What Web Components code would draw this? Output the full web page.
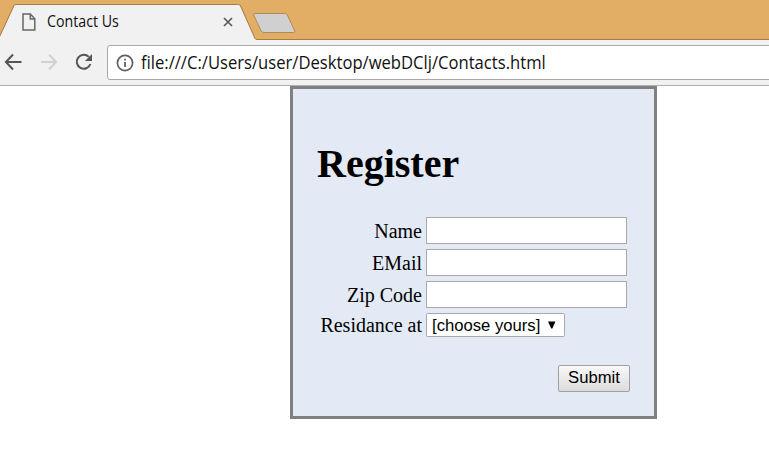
<!DOCTYPE html>
<html lang="en">
<head>
<meta charset="utf-8">
<title>Contact Us</title>
<style>
html,body{margin:0;height:100%;background:#fff;overflow:hidden}
</style>
</head>
<body>
<browser-window>
  <browser-tabs slot="tabs"><fit-text width="72">Contact Us</fit-text></browser-tabs>
  <browser-toolbar slot="toolbar"><fit-text width="405">file:///C:/Users/user/Desktop/webDClj/Contacts.html</fit-text></browser-toolbar>
  <register-form heading="Register">
    <form-row label="Name"><text-field></text-field></form-row>
    <form-row label="EMail"><text-field></text-field></form-row>
    <form-row label="Zip Code"><text-field></text-field></form-row>
    <form-row label="Residance at" compact><choice-field>[choose yours]</choice-field></form-row>
    <submit-button slot="action">Submit</submit-button>
  </register-form>
</browser-window>
<script>
const define = (name, html, ready) => {
  const t = document.createElement('template');
  t.innerHTML = html;
  customElements.define(name, class extends HTMLElement {
    constructor() {
      super();
      this.attachShadow({ mode: 'open' }).append(t.content.cloneNode(true));
    }
    connectedCallback() { if (ready) ready(this, this.shadowRoot); }
  });
};

define('browser-window', `<style>
:host{display:flex;flex-direction:column;width:769px;height:452px;overflow:hidden;background:#fff}
main{display:block;padding-left:290px}
</style><slot name="tabs"></slot><slot name="toolbar"></slot><main><slot></slot></main>`);

define('browser-tabs', `<style>
:host{display:block;position:relative;height:40px;background:#e2ad64;font:15.4px/20px "Open Sans","Noto Sans",sans-serif;color:#111}
.shape{position:absolute;left:0;top:0}
.tab{position:relative;display:flex;align-items:center;box-sizing:border-box;height:40px;width:240px;padding:4px 6px 0 22px}
.page{margin-right:11px}
.close{margin-left:auto}
svg{display:block;flex:none}
</style>
<svg class="shape" width="769" height="40" viewBox="0 0 769 40">
<path d="M-2 40L15 4.500H239.500L255.500 39.500H769V40Z" fill="#f1f1f1"/>
<path d="M-2 40L14 5.500Q14.500 4.500 16 4.500H238.500Q240 4.500 240.600 6L255 38.500Q255.500 39.500 257 39.500H769" fill="none" stroke="#a87b42"/>
<path d="M255 13.500H284.500Q286.500 13.500 287.300 15L294.800 31Q295.400 32.500 293.500 32.500H264Q262 32.500 261.200 31L253.700 15Q253 13.500 255 13.500Z" fill="#d0d0d0" stroke="#af8b5c"/>
</svg>
<div class="tab">
<svg class="page" width="14" height="18" viewBox="0 0 14 18"><path d="M1 1H8.300L12.800 5.700V17H1ZM8.300 1V6H12.800" fill="none" stroke="#666" stroke-width="1.500"/></svg>
<slot></slot>
<svg class="close" width="12" height="12" viewBox="0 0 12 12"><path d="M2 2L10 10M10 2L2 10" stroke="#5a5a5a" stroke-width="1.700"/></svg>
</div>`);

define('browser-toolbar', `<style>
:host{display:flex;box-sizing:border-box;height:46px;padding:5px 0 0 5px;background:#f1f1f1;border-bottom:1px solid #b0b0b0;font:17.7px/24px "Open Sans","Noto Sans",sans-serif;color:#111}
.nav{display:flex;flex:none;gap:17px;width:103px;margin-left:-1px;height:34px;align-items:center}
.box{display:flex;align-items:center;box-sizing:border-box;width:680px;height:35px;flex:none;border:1px solid #a9a9a9;border-radius:3px;background:#fff;padding-left:8px}
.info{margin-right:7px}
fit-text,slot{display:block}
.url{padding-bottom:2px}
svg{display:block;flex:none}
</style>
<div class="nav">
<svg width="18" height="18" viewBox="0 0 18 18"><path d="M9 1.500L1.900 9L9 16.500M2 9H17.500" fill="none" stroke="#555" stroke-width="2"/></svg>
<svg width="18" height="18" viewBox="0 0 18 18"><path d="M10 1.500L17.100 9L10 16.500M17 9H2" fill="none" stroke="#d1d1d1" stroke-width="2"/></svg>
<svg width="18" height="18" viewBox="0 0 18 18"><path d="M14.800 3.900A7 7 0 1 0 16.400 11" fill="none" stroke="#555" stroke-width="2"/><path d="M18 1V8H11Z" fill="#555"/></svg>
</div>
<div class="box">
<svg class="info" width="18" height="18" viewBox="0 0 18 18"><circle cx="9" cy="9" r="7.600" fill="none" stroke="#606060" stroke-width="1.700"/><path d="M9 8V13M9 4.800V6.600" stroke="#606060" stroke-width="1.800"/></svg>
<div class="url"><slot></slot></div>
</div>`);

/* One line of text condensed or widened to a given width. */
define('fit-text', `<style>
:host{display:block;white-space:nowrap}
span{display:inline-block;transform-origin:0 50%}
</style><span><slot></slot></span>`, (el, root) => {
  const s = root.querySelector('span');
  const w = +el.getAttribute('width');
  requestAnimationFrame(() => { s.style.transform = 'scaleX(' + w / s.offsetWidth + ')'; });
  el.style.width = w + 'px';
});

define('register-form', `<style>
:host{display:flex;flex-direction:column;box-sizing:border-box;width:367px;height:333px;border:3px solid #808080;background:#e3eaf6;padding:0 24px;font-family:"Liberation Serif",serif;color:#000}
h1{margin:51px 0 0;font-size:40px;line-height:48px;font-weight:bold}
.rows{display:grid;gap:5px;margin-top:29px}
.action{display:flex;justify-content:flex-end;margin-top:28px}
</style><h1></h1><div class="rows"><slot></slot></div><div class="action"><slot name="action"></slot></div>`,
(el, root) => { root.querySelector('h1').textContent = el.getAttribute('heading'); });

define('form-row', `<style>
:host{display:grid;grid-template-columns:105px 201px;column-gap:4px;height:27px;font-size:20px;line-height:29px}
:host([compact]){height:24px;line-height:24px}
label{text-align:right}
</style><label></label><slot></slot>`,
(el, root) => { root.querySelector('label').textContent = el.getAttribute('label'); });

define('text-field', `<style>
:host{display:block;height:27px}
input{display:block;appearance:none;box-sizing:border-box;width:201px;height:27px;margin:0;padding:2px 4px;border:1px solid #a9a9a9;border-radius:0;background:#fff;font:16.667px "Liberation Sans",sans-serif}
</style><input type="text">`);

define('choice-field', `<style>
:host{display:flex;align-items:center;box-sizing:border-box;width:139px;height:24px;border:1px solid #a9a9a9;border-radius:1.500px;background:#fff;padding-left:5px;font:16.667px/22px "Liberation Sans",sans-serif;white-space:nowrap}
span{width:116px;padding-top:2px}
svg{display:block}
</style><span><slot></slot></span><svg width="8" height="8" viewBox="0 0 8 8"><path d="M0 .5H7.500L4.300 7.500H3.200Z" fill="#000"/></svg>`);

define('submit-button', `<style>
:host{display:block}
button{display:block;box-sizing:border-box;width:72px;height:27px;margin:0;padding:0 0 2px;border:1px solid #a0a0a0;border-radius:2px;background:linear-gradient(#f8f8f8,#dcdcdc);color:#000;font:16.667px/23px "Liberation Sans",sans-serif}
</style><button type="button"><slot></slot></button>`);
</script>
</body>
</html>
